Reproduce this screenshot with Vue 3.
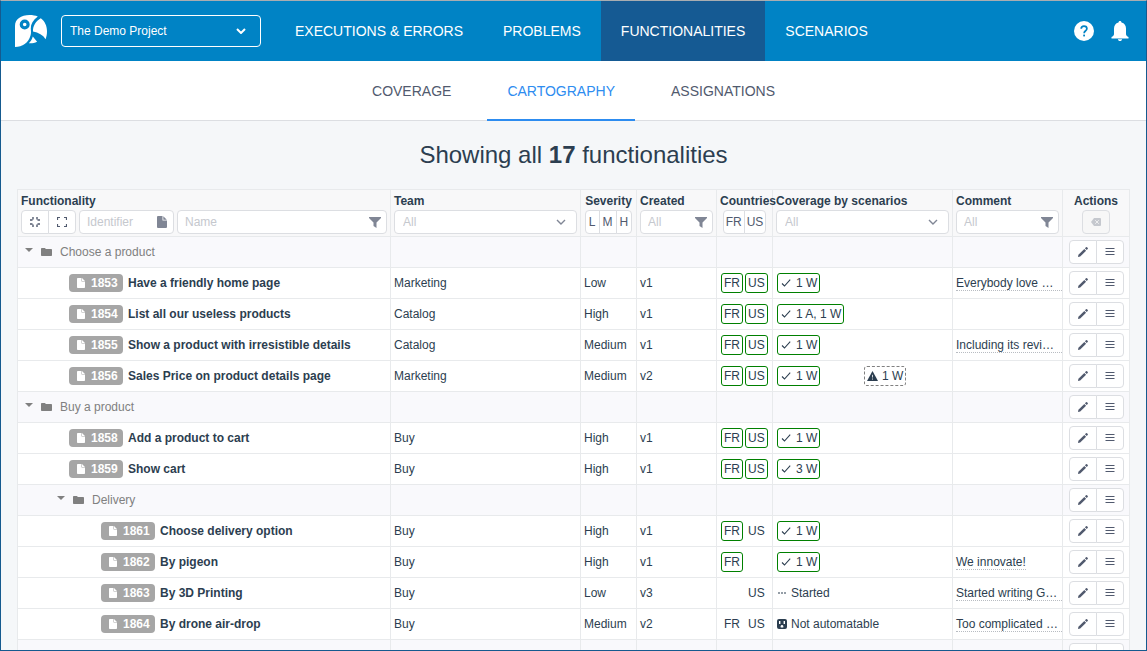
<script setup>
import { ref } from 'vue'

const project = ref('The Demo Project')
const mainTabs = ['EXECUTIONS & ERRORS', 'PROBLEMS', 'FUNCTIONALITIES', 'SCENARIOS']
const subTabs = ['COVERAGE', 'CARTOGRAPHY', 'ASSIGNATIONS']
const activeMain = ref('FUNCTIONALITIES')
const activeSub = ref('CARTOGRAPHY')

const both = { FR: 'covered', US: 'covered' }
const rows = [
  { group: true, level: 0, name: 'Choose a product' },
  { level: 1, id: 1853, name: 'Have a friendly home page', team: 'Marketing', severity: 'Low', created: 'v1', countries: both, covered: '1 W', comment: 'Everybody love …' },
  { level: 1, id: 1854, name: 'List all our useless products', team: 'Catalog', severity: 'High', created: 'v1', countries: both, covered: '1 A, 1 W' },
  { level: 1, id: 1855, name: 'Show a product with irresistible details', team: 'Catalog', severity: 'Medium', created: 'v1', countries: both, covered: '1 W', comment: 'Including its revi…' },
  { level: 1, id: 1856, name: 'Sales Price on product details page', team: 'Marketing', severity: 'Medium', created: 'v2', countries: both, covered: '1 W', warning: '1 W' },
  { group: true, level: 0, name: 'Buy a product' },
  { level: 1, id: 1858, name: 'Add a product to cart', team: 'Buy', severity: 'High', created: 'v1', countries: both, covered: '1 W' },
  { level: 1, id: 1859, name: 'Show cart', team: 'Buy', severity: 'High', created: 'v1', countries: both, covered: '3 W' },
  { group: true, level: 1, name: 'Delivery' },
  { level: 2, id: 1861, name: 'Choose delivery option', team: 'Buy', severity: 'High', created: 'v1', countries: { FR: 'covered', US: 'plain' }, covered: '1 W' },
  { level: 2, id: 1862, name: 'By pigeon', team: 'Buy', severity: 'High', created: 'v1', countries: { FR: 'covered', US: 'none' }, covered: '1 W', comment: 'We innovate!' },
  { level: 2, id: 1863, name: 'By 3D Printing', team: 'Buy', severity: 'Low', created: 'v3', countries: { FR: 'none', US: 'plain' }, started: 'Started', comment: 'Started writing G…' },
  { level: 2, id: 1864, name: 'By drone air-drop', team: 'Buy', severity: 'Medium', created: 'v2', countries: { FR: 'plain', US: 'plain' }, manual: 'Not automatable', comment: 'Too complicated …' },
  { group: true, level: 0, name: '' }
]
</script>

<template>
  <div class="app">
    <header class="topbar">
      <a href="#" class="logo" aria-label="Home">
        <svg width="32" height="32" viewBox="0 0 32 32">
          <path fill="#fff" d="M0 32V11C0 4 6 0 14.500 0c3.300 0 6 .5 8.300 1.500C18 5 15.700 9 15.800 13.500c.1 2.500.6 4.500-.3 7C13.300 28 7.500 32 0 32z" />
          <path fill="#fff" d="M25.800 3.300C29.900 6.300 32 11 32 16.300c0 3-.5 5.600-1.400 7.900-2.600-4-7-6.700-12.600-7.600-.3-5.500 2.700-10.300 7.800-13.300z" />
          <path fill="#fff" d="M17.800 21.500l4.300 5.300c-2.700 1.300-5.400 1.600-8.300 1.400 2-1.900 3.200-4 4-6.700z" />
          <circle cx="9.700" cy="9.500" r="3.400" fill="none" stroke="#0083c5" stroke-width="3.200" />
        </svg>
      </a>
      <div class="project">
        <select v-model="project" aria-label="Project">
          <option>The Demo Project</option>
        </select>
        <svg width="10" height="6" viewBox="0 0 10 6"><path d="M1 1l4 4 4-4" fill="none" stroke="#fff" stroke-width="2" /></svg>
      </div>
      <nav class="main-nav">
        <a v-for="t in mainTabs" :key="t" href="#" :class="{ active: t === activeMain }" @click.prevent="activeMain = t">{{ t }}</a>
      </nav>
      <div class="tools">
        <button type="button" aria-label="Help">
          <svg width="20" height="20" viewBox="0 0 20 20">
            <circle cx="10" cy="10" r="10" fill="#fff" />
            <path d="M7.200 7.800C7.200 6 8.400 5.100 10 5.100s2.900 1 2.900 2.600c0 2-2.800 2.200-2.800 4.500" fill="none" stroke="#0083c5" stroke-width="1.700" />
            <rect x="9.200" y="13.600" width="1.800" height="1.800" fill="#0083c5" />
          </svg>
        </button>
        <button type="button" aria-label="Notifications">
          <svg width="18" height="20" viewBox="0 0 18 20">
            <path fill="#fff" d="M9 0c.9 0 1.500.6 1.500 1.600 3 .7 4.500 3 4.500 6V13c0 1.400 1 2.200 2.500 3v1.500H.5V16C2 15.200 3 14.400 3 13V7.600c0-3 1.500-5.300 4.500-6C7.500.6 8.100 0 9 0zM6.900 18.200h4.200C11 19.400 10.100 20 9 20s-2-.6-2.100-1.800z" />
          </svg>
        </button>
      </div>
    </header>

    <nav class="sub-nav">
      <a v-for="t in subTabs" :key="t" href="#" :class="{ active: t === activeSub }" @click.prevent="activeSub = t">{{ t }}</a>
    </nav>

    <main>
      <h1>Showing all <strong>17</strong> functionalities</h1>
      <table>
        <colgroup>
          <col /><col class="c-team" /><col class="c-severity" /><col class="c-created" /><col class="c-countries" /><col class="c-coverage" /><col class="c-comment" /><col class="c-actions" />
        </colgroup>
        <thead>
          <tr>
            <th>
              <div class="title">Functionality</div>
              <div class="filters">
                <div class="btn-group">
                  <button type="button" aria-label="Collapse all">
                    <svg width="10" height="10" viewBox="0 0 10 10"><path d="M0 3h2.500M3 2.500V0M7 0v2.500M7.500 3H10M0 7h2.500M3 7.500V10M7 10V7.500M7.500 7H10" fill="none" stroke="currentColor" stroke-width="1.400" /></svg>
                  </button>
                  <button type="button" aria-label="Expand all">
                    <svg width="10" height="10" viewBox="0 0 10 10"><path d="M.5 3V.5H3M7 .5h2.500V3M.5 7v2.500H3M9.500 7v2.500H7" fill="none" stroke="currentColor" stroke-width="1.200" /></svg>
                  </button>
                </div>
                <div class="field field-id">
                  <input type="text" placeholder="Identifier" aria-label="Identifier" />
                  <svg width="10" height="12" viewBox="0 0 10 12"><path fill="currentColor" d="M1 0h4.500v4.500H10V11a1 1 0 0 1-1 1H1a1 1 0 0 1-1-1V1a1 1 0 0 1 1-1zM6.300.2L9.800 3.700H6.300z" /></svg>
                </div>
                <div class="field grow">
                  <input type="text" placeholder="Name" aria-label="Name" />
                  <svg class="funnel" width="12" height="11" viewBox="0 0 12 11"><path fill="currentColor" d="M0 0h12v1L7.500 5.500V11L4.500 9V5.500L0 1z" /></svg>
                </div>
              </div>
            </th>
            <th>
              <div class="title">Team</div>
              <div class="field">
                <select aria-label="Team"><option>All</option></select>
                <svg width="10" height="6" viewBox="0 0 10 6"><path d="M1 1l4 4 4-4" fill="none" stroke="currentColor" stroke-width="1.400" /></svg>
              </div>
            </th>
            <th>
              <div class="title centered">Severity</div>
              <div class="btn-group letters centered">
                <button type="button">L</button><button type="button">M</button><button type="button">H</button>
              </div>
            </th>
            <th>
              <div class="title">Created</div>
              <div class="field">
                <input type="text" placeholder="All" aria-label="Created" />
                <svg class="funnel" width="12" height="11" viewBox="0 0 12 11"><path fill="currentColor" d="M0 0h12v1L7.500 5.500V11L4.500 9V5.500L0 1z" /></svg>
              </div>
            </th>
            <th>
              <div class="title">Countries</div>
              <div class="btn-group letters tight centered">
                <button type="button">FR</button><button type="button">US</button>
              </div>
            </th>
            <th>
              <div class="title">Coverage by scenarios</div>
              <div class="field">
                <select aria-label="Coverage by scenarios"><option>All</option></select>
                <svg width="10" height="6" viewBox="0 0 10 6"><path d="M1 1l4 4 4-4" fill="none" stroke="currentColor" stroke-width="1.400" /></svg>
              </div>
            </th>
            <th>
              <div class="title">Comment</div>
              <div class="field">
                <input type="text" placeholder="All" aria-label="Comment" />
                <svg class="funnel" width="12" height="11" viewBox="0 0 12 11"><path fill="currentColor" d="M0 0h12v1L7.500 5.500V11L4.500 9V5.500L0 1z" /></svg>
              </div>
            </th>
            <th>
              <div class="title centered">Actions</div>
              <div class="btn-group centered">
                <button type="button" disabled aria-label="Clear filters">
                  <svg width="10" height="8" viewBox="0 0 10 8"><path fill="#c5c8ce" d="M3 0h6a1 1 0 0 1 1 1v6a1 1 0 0 1-1 1H3L0 4z" /><path d="M4.200 2.200l3.600 3.600M7.800 2.200L4.200 5.800" stroke="#f7f7f7" stroke-width=".8" /></svg>
                </button>
              </div>
            </th>
          </tr>
        </thead>
        <tbody>
          <tr v-for="(r, i) in rows" :key="i" :class="{ group: r.group }">
            <td>
              <div class="name" :class="[r.group ? 'folder' : 'leaf', 'level-' + r.level]">
                <template v-if="r.group">
                  <svg class="caret" width="8" height="4" viewBox="0 0 8 4"><path d="M0 0h8L4 4z" fill="currentColor" /></svg>
                  <svg width="11" height="8" viewBox="0 0 11 8"><path d="M.8 0h3l1.200 1h5.200a.8.800 0 0 1 .8.800v5.400a.8.800 0 0 1-.8.800H.8A.8.800 0 0 1 0 7.200V.8A.8.800 0 0 1 .8 0z" fill="currentColor" /></svg>
                  <span>{{ r.name }}</span>
                </template>
                <template v-else>
                  <span class="badge">
                    <svg width="8" height="10" viewBox="0 0 8 10"><path fill="#fff" d="M.8 0h3.700v3.500H8v5.700a.8.800 0 0 1-.8.800H.8a.8.800 0 0 1-.8-.8V.8A.8.800 0 0 1 .8 0zM5 0l3 3H5z" /></svg>
                    {{ r.id }}
                  </span>
                  <strong>{{ r.name }}</strong>
                </template>
              </div>
            </td>
            <td>{{ r.team }}</td>
            <td>{{ r.severity }}</td>
            <td>{{ r.created }}</td>
            <td>
              <div v-if="r.countries" class="countries">
                <span v-for="(state, c) in r.countries" :key="c" class="country" :class="state">{{ c }}</span>
              </div>
            </td>
            <td>
              <div v-if="!r.group" class="coverage">
                <span v-if="r.covered" class="chip">
                  <svg width="12" height="10" viewBox="0 0 12 10"><path d="M2 5.500L4.500 8l5.700-6.300" fill="none" stroke="currentColor" stroke-width="1.100" /></svg>{{ r.covered }}
                </span>
                <span v-if="r.warning" class="chip warning">
                  <svg width="11" height="10" viewBox="0 0 11 10"><path d="M5.500 0L11 10H0z" fill="currentColor" /><path d="M5.500 3.800v2.700M5.500 7.500v1.100" stroke="#fff" stroke-width=".8" /></svg>{{ r.warning }}
                </span>
                <span v-if="r.started" class="status">
                  <svg width="10" height="10" viewBox="0 0 10 10"><path d="M1 5h2M4 5h2M7 5h2" stroke="currentColor" stroke-width="1.200" /></svg>{{ r.started }}
                </span>
                <span v-if="r.manual" class="status">
                  <svg width="10" height="10" viewBox="0 0 10 10"><rect width="10" height="10" rx="2" fill="currentColor" /><path d="M2.700 2v3M7.300 2v3" stroke="#fff" stroke-width="1.400" /><path d="M3.700 8.500V7.200a1.300 1.300 0 0 1 2.600 0v1.300z" fill="#fff" /></svg>{{ r.manual }}
                </span>
              </div>
            </td>
            <td class="comment-cell">
              <div v-if="r.comment" class="comment" :class="{ cut: r.comment.endsWith('…') }">{{ r.comment }}</div>
            </td>
            <td>
              <div class="btn-group centered">
                <button type="button" aria-label="Edit">
                  <svg width="10" height="10" viewBox="0 0 10 10"><path fill="currentColor" d="M0 10l.4-2.200L6.300 1.900l1.800 1.800L2.200 9.600zM6.900 1.300L8 .3a.8.800 0 0 1 1.100 0l.6.6a.8.800 0 0 1 0 1.100L8.700 3.100z" /></svg>
                </button>
                <button type="button" aria-label="Menu">
                  <svg width="10" height="8" viewBox="0 0 10 8"><path d="M.5 .5h9M.5 3.500h9M.5 6.500h9" stroke="currentColor" stroke-width="1" /></svg>
                </button>
              </div>
            </td>
          </tr>
        </tbody>
      </table>
    </main>
  </div>
</template>

<style>
body {
  margin: 0;
}
</style>

<style scoped>
* {
  box-sizing: border-box;
}
.app {
  height: 100vh;
  overflow: hidden;
  border: 1px solid #155a8f;
  border-top-color: #a9adb1;
  background: #f5f7f9;
  color: #2c3e50;
  font-family: "Liberation Sans", Arial, sans-serif;
  font-size: 12px;
}
svg {
  display: block;
  flex: none;
}
button, input, select {
  font: inherit;
  margin: 0;
}
a {
  text-decoration: none;
}
.topbar {
  display: flex;
  align-items: center;
  height: 60px;
  padding: 0 17px 0 14px;
  background: #0083c5;
}
.project {
  display: grid;
  align-items: center;
  width: 200px;
  margin: 0 14px;
}
.project select, .project svg {
  grid-area: 1 / 1;
}
.project svg {
  justify-self: end;
  margin-right: 15px;
  pointer-events: none;
}
.project select {
  appearance: none;
  width: 100%;
  height: 32px;
  padding: 0 24px 0 8px;
  border: 1px solid #fff;
  border-radius: 4px;
  background: transparent;
  color: #fff;
}
.main-nav {
  display: flex;
}
.main-nav a {
  padding: 0 20px;
  color: #fff;
  font-size: 14px;
  line-height: 60px;
}
.main-nav a.active {
  background: #155a93;
}
.tools {
  display: flex;
  gap: 17px;
  margin-left: auto;
}
.tools button {
  padding: 0;
  border: 0;
  background: none;
}
.sub-nav {
  display: flex;
  justify-content: center;
  gap: 16px;
  height: 60px;
  border-bottom: 1px solid #dcdee2;
  background: #fff;
}
.sub-nav a {
  height: 60px;
  padding: 0 20px;
  border-bottom: 2px solid transparent;
  color: #515a6e;
  font-size: 14px;
  line-height: 60px;
}
.sub-nav a.active {
  border-bottom-color: #2d8cf0;
  color: #2d8cf0;
}
main {
  padding: 0 16px;
}
h1 {
  margin: 0;
  padding: 18px 0;
  font-size: 24px;
  font-weight: 400;
  line-height: 32px;
  text-align: center;
}
table {
  width: 100%;
  table-layout: fixed;
  border-collapse: separate;
  border-spacing: 0;
  border-top: 1px solid #e8eaec;
  border-left: 1px solid #e8eaec;
}
.c-team { width: 190px; }
.c-severity { width: 56px; }
.c-created { width: 80px; }
.c-countries { width: 56px; }
.c-coverage { width: 180px; }
.c-comment { width: 110px; }
.c-actions { width: 67px; }
th, td {
  border-right: 1px solid #e8eaec;
  border-bottom: 1px solid #e8eaec;
  text-align: left;
  white-space: nowrap;
}
th {
  height: 47px;
  padding: 3px 3px 2px;
  background: #f8f8f9;
  font-weight: 400;
  vertical-align: top;
}
td {
  height: 31px;
  padding: 0 3px;
  background: #fff;
}
.group td {
  background: #f9f9fc;
}
.title {
  height: 17px;
  font-weight: 700;
  line-height: 16px;
}
.title.centered {
  display: flex;
  justify-content: center;
}
.filters {
  display: flex;
  gap: 3px;
}
.field {
  display: grid;
  align-items: center;
  min-width: 0;
  color: #808695;
}
.field-id {
  width: 95px;
}
.grow {
  flex: 1;
}
.field input, .field select, .field svg {
  grid-area: 1 / 1;
}
.field input, .field select {
  appearance: none;
  width: 100%;
  min-width: 0;
  height: 24px;
  padding: 0 24px 0 7px;
  border: 1px solid #dcdee2;
  border-radius: 4px;
  background: #fff;
  color: #c5c8ce;
}
.field select {
  padding-left: 8px;
}
.field input::placeholder {
  color: #c5c8ce;
}
.field svg {
  justify-self: end;
  margin-right: 11px;
  pointer-events: none;
}
.field-id svg {
  margin-right: 7px;
}
.field svg.funnel {
  margin-right: 6px;
}
.btn-group {
  display: flex;
}
.btn-group.centered {
  justify-content: center;
}
.btn-group button {
  display: flex;
  align-items: center;
  justify-content: center;
  width: 28px;
  height: 24px;
  padding: 0;
  border: 1px solid #dcdee2;
  background: #fff;
  color: #515a6e;
}
.btn-group button + button {
  margin-left: -1px;
}
.btn-group button:first-child {
  border-top-left-radius: 4px;
  border-bottom-left-radius: 4px;
}
.btn-group button:last-child {
  border-top-right-radius: 4px;
  border-bottom-right-radius: 4px;
}
.btn-group button:disabled {
  background: #f7f7f7;
}
.btn-group.letters button {
  width: auto;
  padding: 0 3px;
}
.btn-group.tight button {
  padding: 0 2px;
}
.name {
  display: flex;
  align-items: center;
}
.folder {
  gap: 8px;
  padding-left: 4px;
  color: #808080;
}
.folder.level-1 {
  padding-left: 36px;
}
.caret {
  margin-bottom: 4px;
}
.leaf {
  gap: 5px;
  padding-left: 48px;
}
.leaf.level-2 {
  padding-left: 80px;
}
.badge {
  display: flex;
  align-items: center;
  gap: 6px;
  width: 54px;
  height: 18px;
  padding-left: 8px;
  border-radius: 4px;
  background: #a6a6a6;
  color: #fff;
  font-weight: 700;
}
.countries {
  display: flex;
  gap: 2px;
  padding-left: 1px;
}
.country {
  height: 20px;
  padding: 0 2px;
  border: 1px solid transparent;
  border-radius: 3px;
  line-height: 18px;
}
.country.covered {
  border-color: #008000;
}
.country.none {
  visibility: hidden;
}
.coverage {
  display: grid;
  grid-template-columns: 1fr 1fr;
  justify-items: start;
  margin-right: -2px;
  padding-left: 1px;
}
.chip, .status {
  display: flex;
  align-items: center;
  gap: 4px;
  height: 20px;
}
.chip {
  padding: 0 2px;
  border: 1px solid #008000;
  border-radius: 3px;
}
.chip.warning {
  border: 1px dashed #808080;
}
.comment-cell {
  padding-right: 0;
}
.comment {
  width: fit-content;
  padding-top: 1px;
  border-bottom: 1px dotted #b8bcc2;
  line-height: 14px;
}
.comment.cut {
  width: auto;
}
</style>
